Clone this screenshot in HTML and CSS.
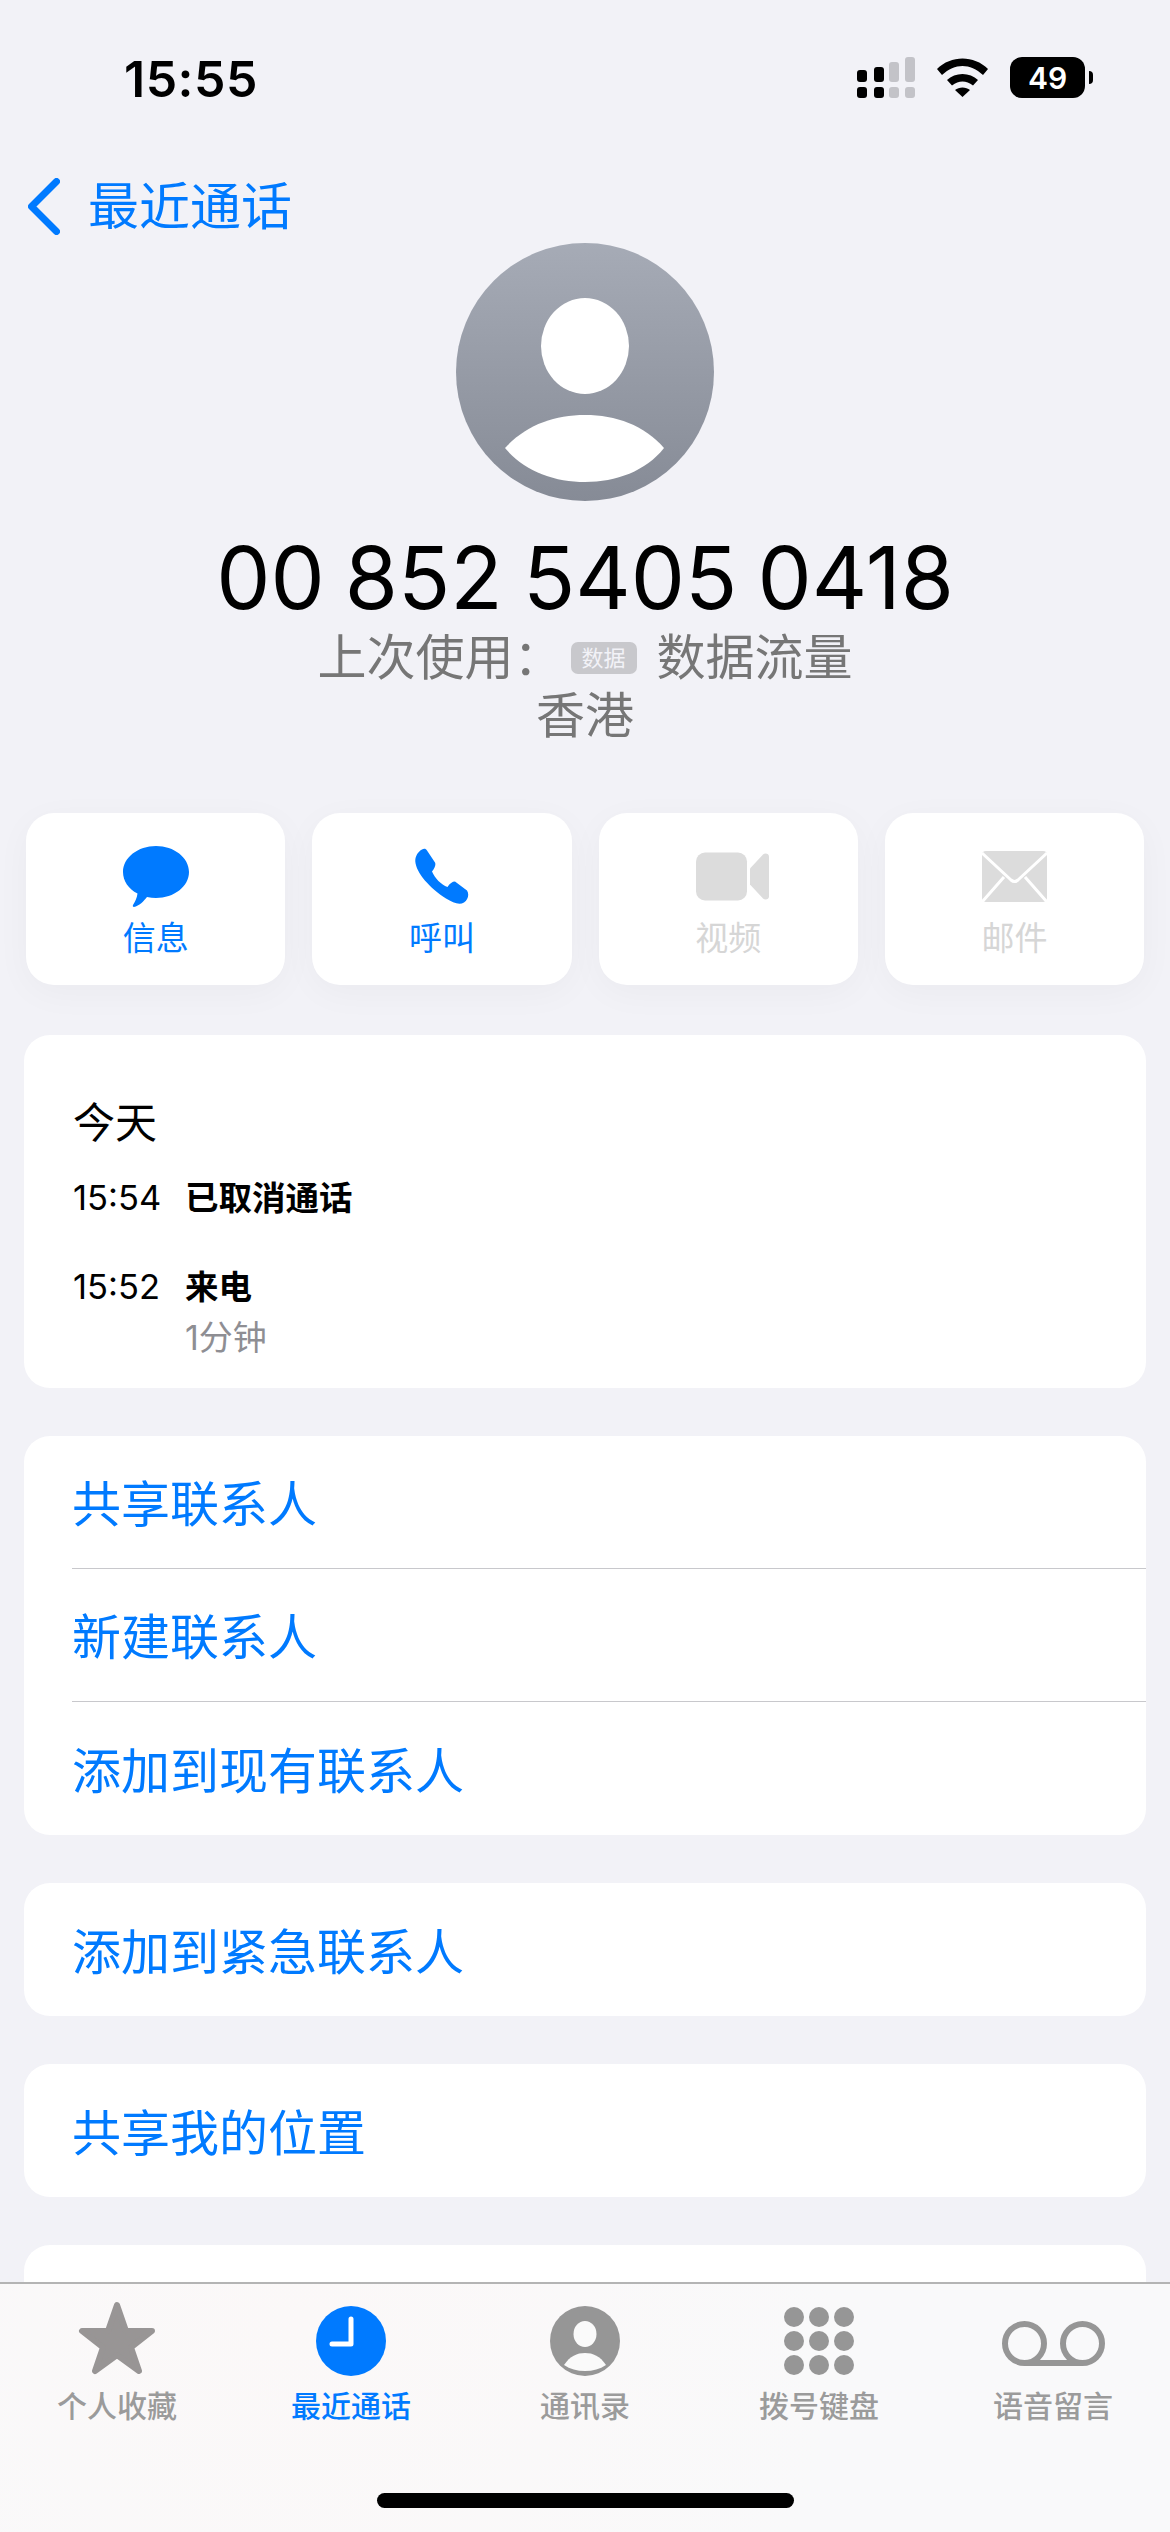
FILE: index.html
```html
<!DOCTYPE html>
<html lang="zh-Hans">
<head>
    <meta charset="UTF-8">
    <meta name="viewport" content="width=device-width, initial-scale=1.0">
    <title>最近通话</title>
    <link rel="stylesheet" href="styles.css">
</head>
<body>
<div class="phone">
    <div class="status-bar">
        <span class="clock">15:55</span>
        <div class="status-icons">
            <svg class="signal" width="58" height="41" viewBox="0 0 58 41">
                <rect x="0" y="13" width="10" height="12" rx="3"/>
                <rect x="17" y="10" width="10" height="15" rx="3"/>
                <rect x="32" y="5" width="10" height="20" rx="3" fill="#c3c3c8"/>
                <rect x="48" y="0" width="10" height="25" rx="3" fill="#c3c3c8"/>
                <rect x="0" y="30" width="10" height="11" rx="3"/>
                <rect x="17" y="30" width="10" height="11" rx="3"/>
                <rect x="32" y="30" width="10" height="11" rx="3" fill="#c3c3c8"/>
                <rect x="48" y="30" width="10" height="11" rx="3" fill="#c3c3c8"/>
            </svg>
            <svg class="wifi" width="51" height="39" viewBox="0 0 51 39">
                <path d="M0 11C14-3 37-3 51 11L46 17C33 5 18 5 5 17Z"/>
                <path d="M10 22C18 14 33 14 41 22L36 27.5C29 22 22 22 15 27.5Z"/>
                <path d="M18 32C22 28.5 29 28.5 33 32L25.5 39Z"/>
            </svg>
            <div class="battery"><span class="battery-level">49</span><i class="battery-nub"></i></div>
        </div>
    </div>

    <div class="nav">
        <svg width="32" height="57" viewBox="0 0 32 57"><path d="M28.500 3.500L3.500 28.500L28.500 53.500" fill="none" stroke="#007aff" stroke-width="7" stroke-linecap="round" stroke-linejoin="round"/></svg>
        <span class="nav-title">最近通话</span>
    </div>

    <div class="contact">
        <svg class="avatar" width="258" height="258" viewBox="0 0 258 258">
            <defs>
                <linearGradient id="avatarBg" x1="0" y1="0" x2="0" y2="1">
                    <stop offset="0" stop-color="#a6abb6"/>
                    <stop offset="1" stop-color="#868b96"/>
                </linearGradient>
            </defs>
            <circle cx="129" cy="129" r="129" fill="url(#avatarBg)"/>
            <ellipse cx="129" cy="103" rx="44" ry="48" fill="#fff"/>
            <path d="M49 205C70 182 98 172 129 172C160 172 188 182 208 205C190 228 160 239 129 239C98 239 68 228 49 205Z" fill="#fff"/>
        </svg>
        <h1 class="number">00 852 5405 0418</h1>
        <p class="sub">上次使用：<span class="sim-badge">数据</span>数据流量</p>
        <p class="sub">香港</p>
    </div>

    <div class="actions">
        <div class="action">
            <svg width="66" height="61" viewBox="0 0 66 61"><path d="M33 0C51 0 66 11.500 66 26C66 40.500 51 52 33 52C30 52 27 51.700 24 51C21 55 16 60 11 61C10 61 9.500 60 10 59C12 56 14 52 14.500 47.500C5.500 43 0 35 0 26C0 11.500 15 0 33 0Z" fill="#007aff"/></svg>
            <span class="action-label">信息</span>
        </div>
        <div class="action">
            <svg width="54" height="56" viewBox="0 0 54 56"><path d="M7 1C9-.5 11 0 12 2L20 14Q21.500 17 17 23C20 30 26 36 32.500 38.500Q36 33 40 33L52 42C54.500 46 53 51 49 54C44 57 38 54 31 50C15 40 1 24 .3 13C0 8 3 3 7 1Z" fill="#007aff"/></svg>
            <span class="action-label">呼叫</span>
        </div>
        <div class="action disabled">
            <svg class="video-icon" width="73" height="48" viewBox="0 0 73 48"><rect width="51" height="48" rx="9" fill="#dcdcdc"/><path d="M54 16L67 2C69 0 73 1 73 4V44C73 47 69 48 67 46L54 32Z" fill="#dcdcdc"/></svg>
            <span class="action-label">视频</span>
        </div>
        <div class="action disabled">
            <svg width="65" height="51" viewBox="0 0 65 51"><rect width="65" height="51" rx="4" fill="#dcdcdc"/><path d="M0 2L29 29Q32.500 32 36 29L65 2M0 51L22 26M65 51L43 26" fill="none" stroke="#fff" stroke-width="3"/></svg>
            <span class="action-label">邮件</span>
        </div>
    </div>

    <div class="card calls">
        <div class="calls-day">今天</div>
        <div class="call-row">
            <span class="call-time">15:54</span>
            <span class="call-type">已取消通话</span>
        </div>
        <div class="call-row second">
            <span class="call-time">15:52</span>
            <div>
                <span class="call-type">来电</span>
                <div class="call-length">1分钟</div>
            </div>
        </div>
    </div>

    <div class="card">
        <div class="link-row">共享联系人</div>
        <div class="link-row">新建联系人</div>
        <div class="link-row">添加到现有联系人</div>
    </div>
    <div class="card">
        <div class="link-row">添加到紧急联系人</div>
    </div>
    <div class="card">
        <div class="link-row">共享我的位置</div>
    </div>
    <div class="card">
        <div class="link-row">阻止此来电号码</div>
    </div>

    <div class="tab-bar">
        <div class="tabs">
            <div class="tab">
                <svg class="star-icon" width="78" height="74" viewBox="0 0 78 74"><path d="M39 4L48 30H74L53 46.500L61 70L39 54L17 70L25 46.500L4 30H30Z" fill="#989595" stroke="#989595" stroke-width="6" stroke-linejoin="round"/></svg>
                <span class="tab-label">个人收藏</span>
            </div>
            <div class="tab active">
                <svg width="70" height="70" viewBox="0 0 70 70"><circle cx="35" cy="35" r="35" fill="#007aff"/><path d="M35 13V38H16" fill="none" stroke="#fff" stroke-width="5" stroke-linecap="round" stroke-linejoin="round"/></svg>
                <span class="tab-label">最近通话</span>
            </div>
            <div class="tab">
                <svg width="70" height="70" viewBox="0 0 70 70"><circle cx="35" cy="35" r="35" fill="#969696"/><ellipse cx="35" cy="28" rx="11.500" ry="13" fill="#fafafa"/><path d="M14 59C20 50 27 47 35 47C43 47 50 50 56 59C50 63 43 65 35 65C27 65 20 63 14 59Z" fill="#fafafa"/></svg>
                <span class="tab-label">通讯录</span>
            </div>
            <div class="tab">
                <svg class="keypad" width="70" height="70" viewBox="0 0 70 70" fill="#969696">
                    <circle cx="10" cy="11" r="10"/><circle cx="35" cy="11" r="10"/><circle cx="60" cy="11" r="10"/>
                    <circle cx="10" cy="35" r="10"/><circle cx="35" cy="35" r="10"/><circle cx="60" cy="35" r="10"/>
                    <circle cx="10" cy="59" r="10"/><circle cx="35" cy="59" r="10"/><circle cx="60" cy="59" r="10"/>
                </svg>
                <span class="tab-label">拨号键盘</span>
            </div>
            <div class="tab">
                <svg width="103" height="70" viewBox="0 0 103 70"><path d="M22.500 57H80.500M22.500 57A19.500 19.500 0 1 1 22.500 18A19.500 19.500 0 1 1 22.500 57ZM80.500 57A19.500 19.500 0 1 1 80.500 18A19.500 19.500 0 1 1 80.500 57Z" fill="none" stroke="#969696" stroke-width="6"/></svg>
                <span class="tab-label">语音留言</span>
            </div>
        </div>
        <div class="home-indicator"></div>
    </div>
</div>
</body>
</html>
```

FILE: styles.css
```css
* {
    box-sizing: border-box;
}
body {
    margin: 0;
    font-family: Inter, "Noto Sans CJK SC", sans-serif;
    background: #f2f2f7;
}
.phone {
    position: relative;
    width: 1170px;
    height: 2532px;
    overflow: hidden;
    background: #f2f2f7;
}
.status-bar {
    height: 170px;
    padding: 51px 85px 0 124px;
    display: flex;
    justify-content: space-between;
    align-items: flex-start;
}
.clock {
    font-size: 50px;
    font-weight: 600;
    line-height: 56px;
    color: #000;
    letter-spacing: 0.5px;
}
.status-icons {
    display: flex;
    align-items: center;
    gap: 22px;
    margin-top: 6px;
}
.battery {
    position: relative;
    width: 75px;
    height: 41px;
    border-radius: 12px;
    background: #000;
    display: flex;
    justify-content: center;
    align-items: center;
}
.battery-level {
    color: #fff;
    font-size: 30px;
    font-weight: 600;
    line-height: 1;
}
.battery-nub {
    position: absolute;
    right: -8px;
    top: 14px;
    width: 4px;
    height: 13px;
    background: #000;
    border-radius: 0 6px 6px 0;
}
.nav {
    height: 73px;
    padding-left: 28px;
    display: flex;
    align-items: center;
    gap: 28px;
}
.nav-title {
    color: #007aff;
    font-size: 51px;
    line-height: 60px;
}
.contact {
    text-align: center;
}
.avatar {
    display: block;
    margin: 0 auto;
}
.number {
    margin: 27px 0 1px;
    font-size: 86px;
    font-weight: 400;
    line-height: 100px;
    color: #000;
    word-spacing: -4px;
}
.sub {
    margin: 0;
    font-size: 49px;
    line-height: 58px;
    color: #767676;
    display: flex;
    justify-content: center;
    align-items: center;
}
.sim-badge {
    width: 66px;
    height: 32px;
    margin: 0 20px 0 8px;
    border-radius: 7px;
    background: #c8c8cc;
    color: #f2f2f7;
    font-size: 22px;
    line-height: 32px;
    text-align: center;
}
.actions {
    margin: 68px 26px 0;
    display: flex;
    gap: 27px;
}
.action {
    flex: 1;
    height: 172px;
    background: #fff;
    border-radius: 28px;
    box-shadow: 0 8px 36px rgba(0, 0, 0, 0.035);
    display: flex;
    flex-direction: column;
    align-items: center;
    color: #007aff;
}
.action svg {
    display: block;
    margin-top: 33px;
    height: 61px;
}
.action .video-icon {
    margin-left: 8px;
}
.action-label {
    margin-top: 8px;
    font-size: 33px;
    line-height: 46px;
}
.action.disabled {
    color: #d6d6d6;
}
.card {
    margin: 48px 24px 0;
    background: #fff;
    border-radius: 26px;
}
.calls {
    height: 353px;
    margin-top: 50px;
    padding: 63px 49px 0;
}
.calls-day {
    font-size: 42px;
    line-height: 50px;
    color: #000;
}
.call-row {
    margin-top: 26px;
    display: flex;
    gap: 21px;
    font-size: 34px;
    line-height: 48px;
    color: #000;
}
.call-row.second {
    margin-top: 41px;
}
.call-time {
    width: 91px;
    font-size: 34.500px;
}
.call-type {
    font-size: 33.500px;
    font-weight: 600;
}
.call-length {
    margin-top: 3px;
    color: #8e8e93;
}
.link-row {
    height: 133px;
    margin-left: 48px;
    padding-bottom: 3px;
    display: flex;
    align-items: center;
    color: #007aff;
    font-size: 49px;
    border-bottom: 1px solid #c8c8cc;
}
.link-row:last-child {
    border-bottom: none;
}
.tab-bar {
    position: absolute;
    left: 0;
    right: 0;
    bottom: 0;
    height: 250px;
    border-top: 2px solid #b4b4b4;
    background: radial-gradient(circle at 300px 40px, #fbf8f8, #f9f9fa 60%);
}
.tabs {
    display: flex;
    height: 209px;
}
.tab {
    flex: 1;
    display: flex;
    flex-direction: column;
    align-items: center;
    color: #9b9b9b;
}
.tab svg {
    display: block;
    margin-top: 20px;
    height: 74px;
}
.tab .star-icon {
    margin-top: 17px;
    margin-bottom: 3px;
}
.tab.active {
    color: #007aff;
}
.tab-label {
    margin-top: 8px;
    font-size: 30px;
    font-weight: 500;
    line-height: 40px;
}
.home-indicator {
    width: 417px;
    height: 15px;
    margin-left: 377px;
    border-radius: 8px;
    background: #000;
}
```
